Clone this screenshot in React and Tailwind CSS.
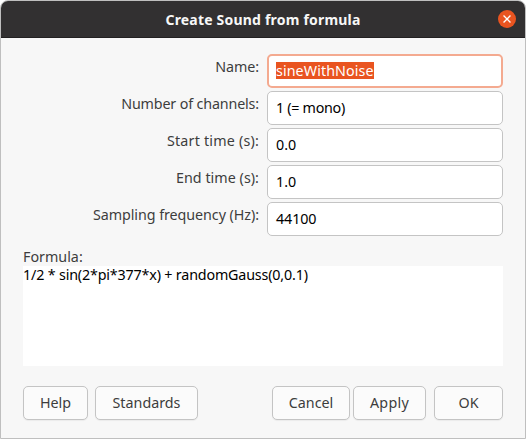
const fields = [
  { label: "Name:", value: "sineWithNoise", selected: true, labelGap: "tracking-[-0.1px]", valueGap: "tracking-[0.08px]" },
  { label: "Number of channels:", value: "1 (= mono)", labelGap: "tracking-[-0.15px]", valueGap: "tracking-[-0.3px]" },
  { label: "Start time (s):", value: "0.0", labelGap: "tracking-[0.2px]", valueGap: "tracking-[0px]" },
  { label: "End time (s):", value: "1.0", labelGap: "tracking-[0.04px]", valueGap: "tracking-[0px]" },
  { label: "Sampling frequency (Hz):", value: "44100", labelGap: "tracking-[-0.06px]", valueGap: "tracking-[-0.1px]" },
];

function Field({ label, value, selected, labelGap, valueGap }) {
  return (
    <div className="flex h-[34px]">
      <label className={`h-[26px] w-[236px] text-right leading-[26px] text-[#3d3d3d] ${labelGap}`}>{label}</label>
      <div
        className={`ml-2 flex h-[34px] w-[236px] items-start rounded-[5px] bg-white text-black ${
          selected ? "border-2 border-[#f4aa90] pt-[6px] pl-[7px]" : "border border-[#c4c4c4] pt-[7px] pl-2"
        }`}
      >
        <span className={`h-[17px] leading-[17px] ${valueGap} ${selected ? "bg-[#e95420] text-white" : ""}`}>{value}</span>
      </div>
    </div>
  );
}

function Button({ children, className }) {
  return (
    <button
      className={`h-[34px] rounded-[5px] border border-[#c4c4c4] bg-[#fbfbfb] text-center leading-[32px] whitespace-nowrap text-[#3d3d3d] shadow-[0_1px_1px_rgba(0,0,0,0.05)] ${className}`}
    >
      {children}
    </button>
  );
}

export default function App() {
  return (
    <div className="h-[439px] w-[526px] bg-white font-['Noto_Sans',sans-serif] text-[14.3px]">
      <div className="flex h-full flex-col overflow-hidden rounded-t-[8px] border border-[#bfbfbf] bg-[#f7f7f7]">
        <header className="flex h-[37px] shrink-0 items-center border-b border-[#222021] bg-[#323031] pr-[9px] pl-[27px]">
          <h1 className="flex-1 text-center text-[14px] font-bold tracking-[0.2px] text-[#f7f7f7]">Create Sound from formula</h1>
          <button aria-label="Close" className="flex size-[18px] items-center justify-center rounded-full bg-[#e95420]">
            <svg viewBox="0 0 18 18" className="size-[18px]" stroke="white" strokeWidth="1.3" strokeLinecap="square">
              <path d="M6 6l6 6M12 6l-6 6" />
            </svg>
          </button>
        </header>
        <main className="flex flex-col px-[22px] pt-4">
          <div className="flex flex-col gap-[3px]">
            {fields.map((field) => (
              <Field key={field.label} {...field} />
            ))}
          </div>
          <div className="mt-[11px] h-[19px] leading-[19px] text-[#3d3d3d]">Formula:</div>
          <div className="h-[100px] bg-white leading-[18px] tracking-[-0.17px] text-black">1/2 * sin(2*pi*377*x) + randomGauss(0,0.1)</div>
          <div className="mt-5 flex">
            <Button className="w-[65px]">Help</Button>
            <Button className="ml-[7px] w-[103px]">Standards</Button>
            <Button className="ml-auto w-[78px]">Cancel</Button>
            <Button className="ml-[3px] w-[73px] tracking-[0.3px]">Apply</Button>
            <Button className="ml-2 w-[69px]">OK</Button>
          </div>
        </main>
      </div>
    </div>
  );
}
